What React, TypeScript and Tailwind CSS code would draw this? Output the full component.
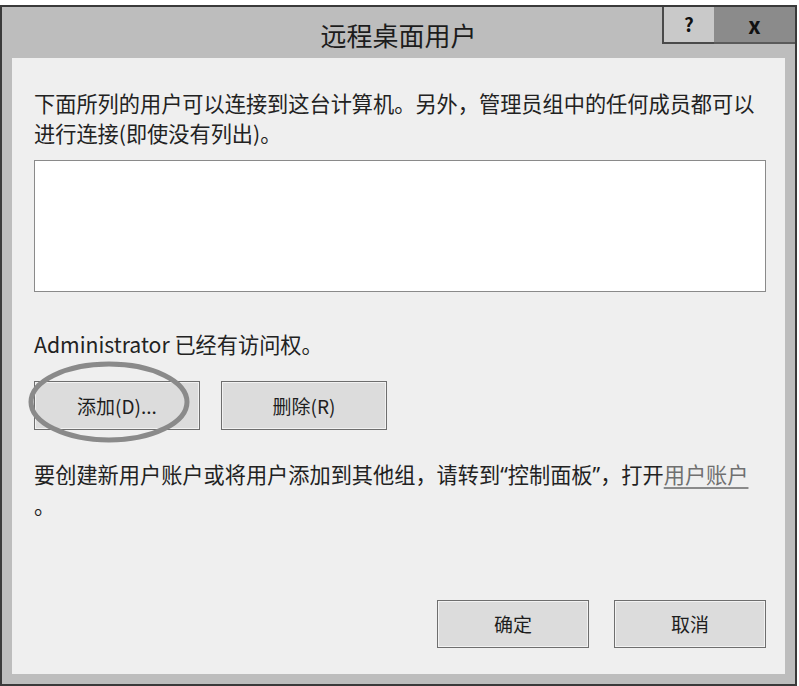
import React from "react";

const font = "font-['Noto_Sans_CJK_SC','Noto_Sans',sans-serif]";

function DlgButton({ label, className }: { label: string; className?: string }) {
  return (
    <button
      className={`flex items-center justify-center border border-[#6e6e6e] bg-[#dcdcdc] text-[19px] text-[#1e1e1e] shadow-[inset_0_0_0_1px_#f2f2f2] ${className ?? ""}`}
    >
      {label}
    </button>
  );
}

export default function App() {
  return (
    <div className={`h-[686px] w-[799px] overflow-hidden bg-white pt-[5px] ${font}`}>
      <div className="flex h-[681px] w-[797px] flex-col border-2 border-[#3a3a3a] bg-[#bdbdbd]">
        {/* title bar */}
        <div className="relative flex h-[51px] shrink-0 items-start">
          <div className="absolute inset-x-0 top-[11px] text-center text-[26px] leading-[34px] text-[#1c1c1c]">
            远程桌面用户
          </div>
          <div className="ml-auto flex h-[37px]">
            <div className="flex w-[52px] items-center justify-center border-b-2 border-l-2 border-[#4a4a4a] bg-[#c9c9c9] text-[19px] font-bold text-[#111]">
              ?
            </div>
            <div className="flex w-[81px] items-center justify-center border-b-2 border-[#5a5a5a] bg-[#8b8b8b] text-[22px] font-bold text-[#111]">
              x
            </div>
          </div>
        </div>

        {/* content */}
        <div className="mx-[10px] mb-[10px] flex flex-1 flex-col bg-[#efefef] pl-[22px] pr-[19px] pt-[30px] pb-[26px] text-[21.2px] leading-[30px] text-[#222]">
          <p className="whitespace-nowrap">
            下面所列的用户可以连接到这台计算机。另外，管理员组中的任何成员都可以
            <br />
            进行连接(即使没有列出)。
          </p>

          <div className="mt-[12px] h-[132px] border border-[#8a8a8a] bg-white" />

          <p className="mt-[37px]">Administrator 已经有访问权。</p>

          <div className="mt-[22px] flex gap-[21px]">
            <div className="relative">
              <DlgButton label="添加(D)..." className="h-[49px] w-[166px]" />
              <svg
                className="pointer-events-none absolute left-[-6px] top-[-21px]"
                width="162"
                height="84"
                viewBox="0 0 162 84"
              >
                <ellipse cx="81" cy="42" rx="78" ry="38" fill="none" stroke="#8a8a8a" strokeWidth="5" />
              </svg>
            </div>
            <DlgButton label="删除(R)" className="h-[49px] w-[166px]" />
          </div>

          <p className="mt-[29px] whitespace-nowrap">
            要创建新用户账户或将用户添加到其他组，请转到
            <span className="font-['Noto_Sans',sans-serif]">“</span>控制面板
            <span className="font-['Noto_Sans',sans-serif]">”</span>，打开
            <span className="text-[#707070] underline decoration-[#8a8a8a] underline-offset-4">用户账户</span>
            <br />。
          </p>

          <div className="mt-auto flex justify-end gap-[25px]">
            <DlgButton label="确定" className="h-[48px] w-[152px]" />
            <DlgButton label="取消" className="h-[48px] w-[152px]" />
          </div>
        </div>
      </div>
    </div>
  );
}
